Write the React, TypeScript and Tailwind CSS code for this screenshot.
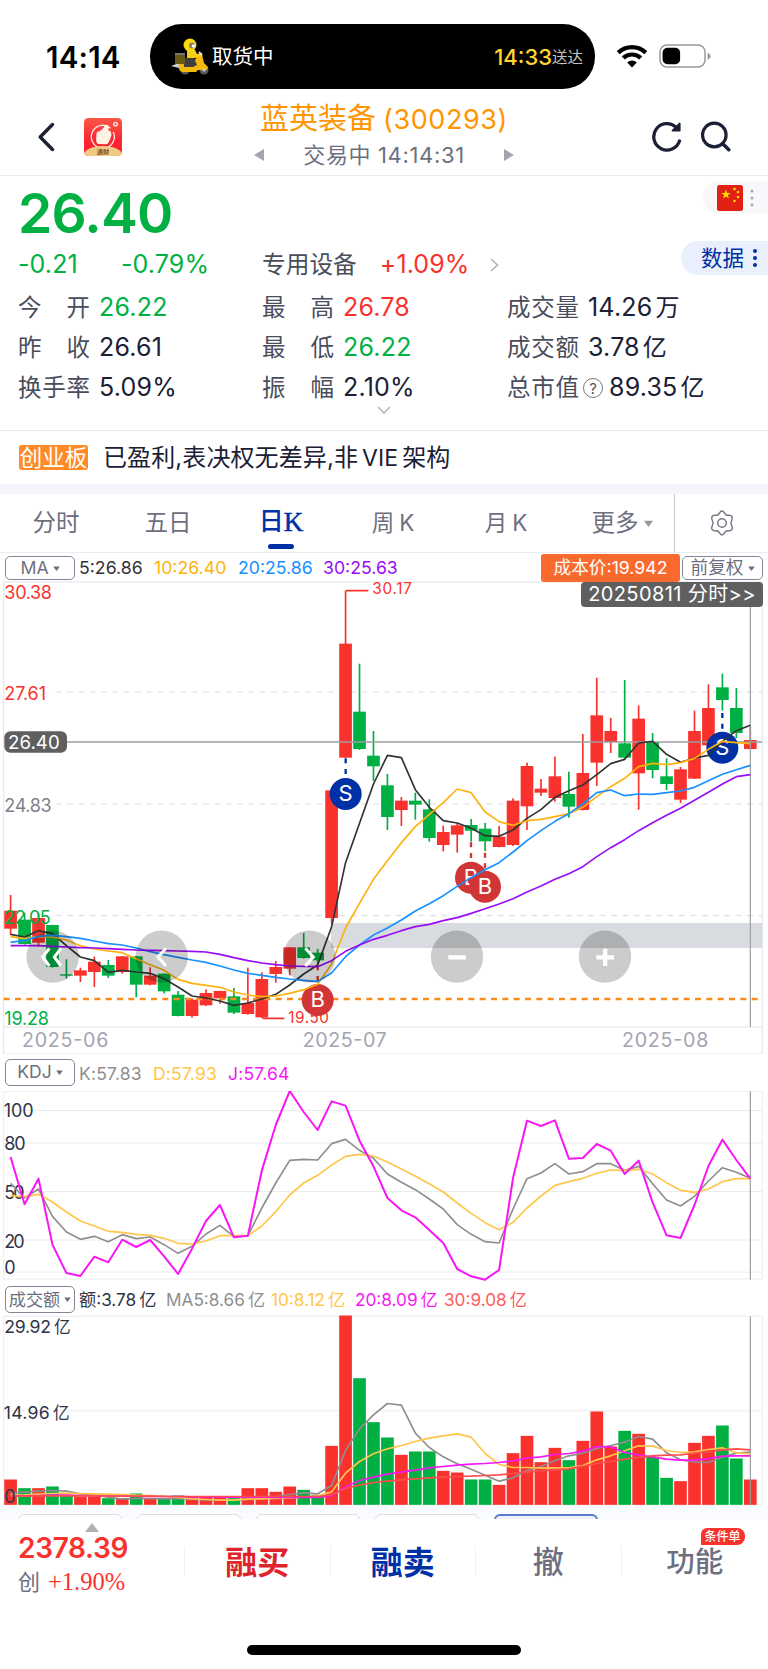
import type { ReactNode } from "react"

const RED = "#f9322d"
const GREEN = "#00b042"

// chart units: 3 per css pixel
const STEP = 41.87
const START = 31.8
const BAR = 38
const LAST_X = 2251

const px = (i: number) => START + STEP * i

// [up (1) / down (0), high, body top, body bottom, low]
const candles = [
  [1, 945, 992, 1046, 1065], [0, 998, 1019, 1092, 1094], [1, 1000, 1014, 1088, 1100], [0, 1034, 1035, 1161, 1163],
  [0, 1138, 1183, 1187, 1196], [1, 1163, 1171, 1187, 1206], [1, 1130, 1145, 1176, 1221], [0, 1140, 1155, 1187, 1194],
  [1, 1128, 1129, 1176, 1181], [0, 1128, 1129, 1214, 1252], [1, 1162, 1187, 1214, 1216], [0, 1180, 1181, 1234, 1240],
  [0, 1233, 1244, 1308, 1309], [1, 1255, 1259, 1308, 1313], [1, 1228, 1239, 1276, 1278], [1, 1232, 1233, 1255, 1271],
  [0, 1224, 1249, 1298, 1302], [1, 1163, 1269, 1302, 1304], [1, 1177, 1197, 1312, 1314], [1, 1143, 1161, 1182, 1208],
  [1, 1101, 1102, 1166, 1186], [0, 1059, 1102, 1134, 1136], [0, 1107, 1118, 1141, 1151], [1, 630, 631, 1014, 1031],
  [1, 32, 191, 533, 533], [0, 251, 395, 507, 510], [0, 453, 527, 559, 603], [0, 582, 616, 711, 750],
  [1, 651, 662, 690, 738], [0, 638, 662, 674, 719], [0, 658, 688, 774, 785], [1, 737, 756, 795, 814],
  [1, 730, 736, 764, 818], [0, 717, 735, 752, 785], [0, 729, 746, 784, 813], [1, 738, 770, 801, 802],
  [1, 655, 662, 795, 798], [1, 548, 558, 679, 750], [1, 597, 626, 638, 648], [1, 530, 589, 654, 665],
  [0, 575, 642, 680, 713], [1, 462, 579, 690, 691], [1, 293, 406, 548, 618], [1, 414, 453, 486, 519],
  [0, 300, 490, 533, 539], [1, 376, 416, 580, 689], [0, 459, 486, 570, 595], [0, 535, 589, 612, 630],
  [1, 561, 568, 659, 669], [1, 392, 453, 596, 597], [1, 313, 384, 496, 497], [0, 281, 322, 360, 392],
  [0, 324, 384, 459, 474], [1, 441, 480, 507, 508],
]

const ma5 = [1063, 1071, 1052, 1061, 1097, 1131, 1142, 1177, 1171, 1176, 1180, 1196, 1221, 1248, 1254, 1263, 1276, 1269, 1257, 1243, 1215, 1182, 1155, 1040, 848, 730, 612, 526, 533, 629, 682, 722, 729, 745, 767, 769, 750, 715, 689, 652, 632, 615, 584, 551, 538, 489, 484, 523, 547, 534, 526, 484, 452, 436]
const ma10 = [1070, 1076, 1070, 1071, 1080, 1097, 1107, 1113, 1118, 1136, 1154, 1171, 1198, 1210, 1216, 1222, 1236, 1245, 1250, 1248, 1240, 1229, 1213, 1152, 1044, 970, 898, 842, 788, 740, 703, 668, 627, 638, 696, 725, 736, 722, 718, 710, 701, 682, 650, 620, 595, 560, 550, 554, 548, 535, 508, 484, 488, 491]
const ma20 = [1087, 1081, 1069, 1066, 1070, 1075, 1083, 1091, 1095, 1104, 1115, 1124, 1132, 1140, 1147, 1158, 1170, 1180, 1186, 1192, 1197, 1201, 1205, 1179, 1130, 1095, 1065, 1044, 1020, 993, 971, 947, 919, 893, 869, 848, 816, 782, 752, 724, 701, 672, 638, 630, 647, 642, 643, 638, 633, 622, 602, 583, 569, 556]
const ma30 = [1097, 1097, 1097, 1099, 1101, 1103, 1104, 1106, 1108, 1110, 1111, 1112, 1113, 1114, 1116, 1123, 1133, 1142, 1149, 1154, 1158, 1159, 1160, 1142, 1114, 1095, 1078, 1066, 1052, 1040, 1033, 1022, 1013, 1000, 986, 972, 956, 936, 918, 898, 881, 860, 830, 803, 779, 752, 728, 706, 685, 661, 637, 612, 590, 584]

const kLine = [401, 445, 418, 500, 547, 569, 560, 576, 555, 567, 562, 585, 611, 590, 553, 527, 561, 558, 475, 400, 332, 329, 331, 282, 269, 302, 326, 373, 398, 420, 448, 478, 525, 554, 576, 580, 478, 387, 370, 342, 373, 366, 342, 342, 362, 350, 402, 451, 469, 440, 394, 354, 368, 386]
const dLine = [438, 441, 434, 457, 487, 514, 529, 545, 548, 554, 557, 566, 581, 583, 574, 558, 558, 558, 529, 486, 436, 400, 377, 346, 320, 314, 319, 337, 358, 380, 402, 427, 460, 491, 519, 540, 518, 475, 439, 407, 396, 386, 371, 361, 362, 359, 373, 399, 422, 428, 418, 396, 387, 387]
const jLine = [322, 464, 387, 585, 670, 679, 621, 638, 570, 592, 571, 620, 673, 597, 514, 466, 563, 558, 363, 226, 124, 187, 241, 155, 168, 273, 350, 445, 482, 503, 541, 580, 658, 680, 690, 661, 385, 213, 229, 212, 327, 325, 283, 303, 373, 333, 458, 557, 565, 466, 349, 270, 331, 387]

const volumes = [599, 625, 625, 620, 645, 650, 650, 655, 655, 641, 655, 655, 647, 650, 650, 652, 655, 625, 625, 636, 620, 630, 645, 498, 107, 295, 427, 473, 525, 515, 515, 573, 578, 599, 599, 615, 520, 468, 547, 504, 541, 483, 395, 500, 453, 462, 531, 594, 604, 489, 468, 437, 536, 599]
const vol5 = [640, 637, 634, 632, 634, 642, 645, 652, 658, 656, 656, 657, 656, 658, 660, 661, 661, 659, 655, 651, 644, 639, 642, 617, 512, 447, 405, 371, 376, 460, 503, 531, 552, 568, 586, 604, 594, 572, 560, 543, 528, 520, 506, 497, 487, 470, 478, 519, 540, 546, 548, 532, 520, 517]
const vol10 = [646, 645, 643, 641, 640, 641, 642, 643, 644, 646, 647, 649, 653, 657, 659, 661, 661, 658, 657, 656, 654, 652, 648, 636, 580, 545, 522, 507, 497, 485, 475, 468, 462, 472, 521, 554, 563, 563, 565, 564, 564, 557, 540, 528, 513, 498, 499, 512, 518, 516, 509, 504, 519, 522]
const vol20 = [649, 648, 647, 646, 646, 647, 648, 649, 649, 650, 650, 650, 650, 651, 651, 652, 652, 652, 652, 653, 653, 653, 653, 648, 621, 602, 592, 583, 577, 571, 564, 560, 556, 553, 551, 548, 543, 535, 531, 524, 521, 514, 500, 501, 518, 526, 532, 538, 541, 541, 537, 529, 528, 528]
const vol30 = [649, 649, 648, 648, 648, 648, 648, 649, 649, 649, 649, 650, 650, 650, 650, 650, 650, 650, 650, 650, 650, 650, 650, 645, 626, 616, 608, 604, 600, 597, 594, 592, 590, 589, 587, 585, 581, 577, 573, 570, 567, 559, 551, 545, 538, 532, 528, 526, 525, 520, 516, 510, 507, 510]

function Line({ data, color, width = 5 }: { data: number[]; color: string; width?: number }) {
  return (
    <polyline
      points={data.map((y, i) => `${px(i)},${y}`).join(" ")}
      fill="none"
      stroke={color}
      strokeWidth={width}
      strokeLinejoin="round"
    />
  )
}

interface LabelProps {
  x: number
  y: number
  w: number
  color: string
  size?: number
  children: string
}

function Label({ x, y, w, color, size = 54, children }: LabelProps) {
  return (
    <text x={x} y={y} fontSize={size} fill={color} textLength={w} lengthAdjust="spacing">
      {children}
    </text>
  )
}

function Marker({ x, y, from, letter }: { x: number; y: number; from: number; letter: "B" | "S" }) {
  const color = letter === "B" ? "#d23535" : "#0030a5"
  return (
    <g>
      <line x1={x} x2={x} y1={from} y2={y - 48} stroke={color} strokeWidth={7} strokeDasharray="15 17" />
      <circle cx={x} cy={y} r={48} fill={color} />
      <text x={x} y={y + 22} fontSize={66} fill="#fff" textAnchor="middle">
        {letter}
      </text>
    </g>
  )
}

function Caret({ className = "" }: { className?: string }) {
  return (
    <svg viewBox="0 0 8 6" className={`w-[7px] h-[5px] ${className}`}>
      <path d="M0 0.5h8L4 6z" fill="currentColor" />
    </svg>
  )
}

function Picker({ className, children }: { className: string; children: ReactNode }) {
  return (
    <button
      className={`flex items-center justify-center gap-1 border border-[#85859a] rounded-[5px] bg-white text-[#6d6f80] whitespace-nowrap shrink-0 ${className}`}
    >
      {children}
      <Caret />
    </button>
  )
}

function StatusBar() {
  return (
    <div className="h-[90px] pt-6 pl-[46px] flex items-start">
      <div className="w-[104px] h-[66px] flex items-center text-[29.5px] font-semibold text-black tracking-[0.2px]">14:14</div>
      <div className="w-[445px] h-[65px] rounded-[32px] bg-black flex items-center pl-[21px] pr-3">
        <svg viewBox="0 0 38 38" className="w-[38px] h-[38px] shrink-0">
          <path d="M0 28l8-3v5z" fill="#cfd0d8" />
          <circle cx="14" cy="32" r="4.5" fill="#585858" />
          <circle cx="33" cy="32" r="4.5" fill="#595959" />
          <path d="M8 26h14l5-10 4 0 2 9 4 4-1 3h-9l-2 2H12c-3 0-5-3-4-8z" fill="#f2b90c" />
          <path d="M13 20h10l3 7-4 2H13z" fill="#3f3e3a" />
          <rect x="4" y="15" width="10" height="11" rx="1" fill="#6a5a16" />
          <path d="M4 15h10v2H4z" fill="#77757b" />
          <path d="M16 12h8l2 4 5-1v3l-7 2h-8z" fill="#f7cf17" />
          <circle cx="19" cy="7" r="6.5" fill="#fbd80f" />
          <circle cx="21" cy="7.5" r="3" fill="#8b8060" />
          <circle cx="22.5" cy="8" r="1.7" fill="#fff" />
          <path d="M28 14l3 3" stroke="#dedfe4" strokeWidth="1.8" />
          <circle cx="33" cy="32" r="1.6" fill="#c8c8c8" />
        </svg>
        <span className="ml-[3px] mt-0.5 text-[20.5px] text-white">取货中</span>
        <span className="ml-auto mt-0.5 text-[22px] font-medium text-[#ffd52e]">14:33</span>
        <span className="mt-[3px] text-[15.5px] text-[#c4c4c4]">送达</span>
      </div>
      <div className="h-16 flex items-center">
        <svg viewBox="0 0 32 24" className="ml-[21px] w-8 h-6">
          <path d="M2.2 8.6a20 20 0 0 1 27.6 0" fill="none" stroke="#000" strokeWidth="4.4" />
          <path d="M7.3 14a12.5 12.5 0 0 1 17.4 0" fill="none" stroke="#000" strokeWidth="4.2" />
          <path d="M11.2 18.4a7 7 0 0 1 9.6 0L16 23.5z" fill="#000" />
        </svg>
        <svg viewBox="0 0 52 24" className="ml-[11px] w-[52px] h-6">
          <rect x="1" y="1" width="45" height="22" rx="7" fill="#fff" stroke="#999" strokeWidth="1.5" />
          <rect x="3.6" y="3.8" width="17.5" height="16.4" rx="4.8" fill="#000" />
          <path d="M48.6 8.4q3 1.4 3 3.8t-3 3.8z" fill="#999" />
        </svg>
      </div>
    </div>
  )
}

function TitleBar() {
  return (
    <div className="h-[86px] flex items-start border-b border-[#ececf0] text-[#1b2035]">
      <svg viewBox="0 0 18 30" className="ml-[37px] mt-[32px] w-[18px] h-[30px]">
        <path d="M15.5 2.5L3.2 15l12.3 12.5" fill="none" stroke="currentColor" strokeWidth="3.4" strokeLinecap="round" strokeLinejoin="round" />
      </svg>
      <svg viewBox="0 0 38 38" className="ml-[29px] mt-[28px] w-[38px] h-[38px]">
        <defs>
          <clipPath id="logo">
            <rect width="38" height="38" rx="4.5" />
          </clipPath>
          <linearGradient id="logoBg" x1="0" y1="0" x2="0" y2="1">
            <stop offset="0" stopColor="#fb5748" />
            <stop offset="0.6" stopColor="#fd2431" />
          </linearGradient>
        </defs>
        <g clipPath="url(#logo)">
          <rect width="38" height="38" fill="url(#logoBg)" />
          <path d="M26.5 10.2A11.5 11.5 0 1 0 29.3 14" fill="none" stroke="#ffe6de" strokeWidth="1.3" />
          <path d="M13 14q3.500-.5 6-3.400c1-1.600 1.500-4 4-3.900 2.200.4 2 3.200 1.200 5.900q3.300.3 3 3 .8 2-.6 3.600.4 2-1.200 3.400-.6 3.800-4.200 3.700l-7-.4q-2.600-1-2-5.600 0-4.800.8-6.300z" fill="#fff1e4" />
          <circle cx="31.5" cy="6.3" r="2.5" fill="#ffd6d0" />
          <circle cx="31.5" cy="6.3" r="1" fill="#fb4a40" />
          <ellipse cx="19" cy="37" rx="19.5" ry="9" fill="#f1ca86" />
          <text x="19" y="36" fontSize="6.2" fontWeight="700" fill="#8a4a17" textAnchor="middle">
            通财
          </text>
        </g>
      </svg>
      <div className="ml-[130px] w-[264px] flex flex-col items-center">
        <div className="mt-[11px] h-9 leading-9 text-[29px] text-[#ff9500] whitespace-nowrap">
          蓝英装备<span className="ml-[7px] text-[27px] tracking-[0.6px]">(300293)</span>
        </div>
        <div className="w-full mt-0.5 h-8 flex items-center justify-between pl-0.5 pr-[2px]">
          <svg viewBox="0 0 10 12" className="w-[10px] h-3">
            <path d="M10 0v12L0 6z" fill="#a3a4af" />
          </svg>
          <span className="text-[22px] text-[#6d6f80] whitespace-nowrap tracking-[0.65px]">交易中 14:14:31</span>
          <svg viewBox="0 0 10 12" className="w-[10px] h-3">
            <path d="M0 0v12l10-6z" fill="#a3a4af" />
          </svg>
        </div>
      </div>
      <svg viewBox="0 0 30 31" className="ml-[136px] mt-[31px] w-[30px] h-[31px]">
        <path d="M27.500 20A13.200 13.200 0 1 1 23.800 6" fill="none" stroke="currentColor" strokeWidth="3.300" strokeLinecap="round" />
        <path d="M27.600 2.600v7h-7z" fill="currentColor" stroke="currentColor" strokeWidth="2" strokeLinejoin="round" />
      </svg>
      <svg viewBox="0 0 30 31" className="ml-[19px] mt-[31px] w-[30px] h-[31px]">
        <circle cx="13.300" cy="14" r="11.800" fill="none" stroke="currentColor" strokeWidth="3.200" />
        <path d="M21.500 22.500l6.300 6.200" stroke="currentColor" strokeWidth="3.500" strokeLinecap="round" />
      </svg>
    </div>
  )
}

interface StatProps {
  label: string
  value: string
  color?: string
  unit?: string
  help?: boolean
}

function Stat({ label, value, color = "text-[#1b2035]", unit, help }: StatProps) {
  return (
    <div className="flex items-center whitespace-nowrap">
      <span className="w-[72px] flex justify-between text-[23.5px] text-[#4a4d5c]">
        {label.split("").map((c) => (
          <span key={c}>{c}</span>
        ))}
      </span>
      {help && (
        <span className="ml-[4px] w-5 h-5 rounded-full border-[1.5px] border-[#777] text-[#555] text-[15px] leading-none flex items-center justify-center">?</span>
      )}
      <span className={`${help ? "ml-[6px]" : "ml-[9px]"} text-[25px] tracking-[0.2px] ${color}`}>{value}</span>
      {unit && <span className="ml-[3px] text-[24px] text-[#1b2035]">{unit}</span>}
    </div>
  )
}

const star = "M0-5L1.2-1.6 4.8-1.5 1.9.6 2.9 4 0 2-2.9 4-1.9.6-4.8-1.5-1.2-1.6z"

function Quote() {
  return (
    <div className="relative h-[255px] border-b border-[#ececf0]">
      <div className="pl-[18px] pt-2.5 h-[65px] flex items-center text-[55px] leading-none font-semibold text-[#00b042] tracking-[-0.7px]">26.40</div>
      <div className="pl-[18px] h-[47px] flex items-center text-[25px] whitespace-nowrap">
        <span className="w-[103px] text-[#00b042] tracking-[0.1px]">-0.21</span>
        <span className="w-[141px] text-[#00b042] tracking-[0.1px]">-0.79%</span>
        <span className="text-[23.7px] text-[#4a4d5c]">专用设备</span>
        <span className="ml-[23px] text-[#f9322d] tracking-[0.1px]">+1.09%</span>
        <svg viewBox="0 0 9 14" className="ml-[21px] w-[9px] h-[14px]">
          <path d="M1 1l6.500 6L1 13" fill="none" stroke="#b5b5bb" strokeWidth="1.700" />
        </svg>
      </div>
      <div className="pl-[18px] grid grid-cols-[244px_245px_1fr] auto-rows-[40px]">
        <Stat label="今开" value="26.22" color="text-[#00b042]" />
        <Stat label="最高" value="26.78" color="text-[#f9322d]" />
        <Stat label="成交量" value="14.26" unit="万" />
        <Stat label="昨收" value="26.61" />
        <Stat label="最低" value="26.22" color="text-[#00b042]" />
        <Stat label="成交额" value="3.78" unit="亿" />
        <Stat label="换手率" value="5.09%" />
        <Stat label="振幅" value="2.10%" />
        <Stat label="总市值" value="89.35" unit="亿" help />
      </div>
      <svg viewBox="0 0 14 8" className="mx-auto -mt-[2px] w-[14px] h-2">
        <path d="M1 1l6 6 6-6" fill="none" stroke="#b5b5bb" strokeWidth="1.600" />
      </svg>
      {/* Pestañas flotantes */}
      <div className="absolute right-0 top-[5px] w-[65px] h-[33px] rounded-l-full bg-[#f8f8fa] pl-[14px] flex items-center">
        <svg viewBox="0 0 26 26" className="w-[26px] h-[26px]">
          <rect width="26" height="26" rx="2.5" fill="#e02113" />
          <path d={star} transform="translate(9 9.500)" fill="#ffde00" />
          <circle cx="17.5" cy="4" r="1.3" fill="#ffde00" />
          <circle cx="21" cy="7" r="1.3" fill="#ffde00" />
          <circle cx="21" cy="12" r="1.3" fill="#ffde00" />
          <circle cx="17.5" cy="16" r="1.3" fill="#ffde00" />
        </svg>
        <svg viewBox="0 0 4 18" className="ml-[7px] w-1 h-[18px] fill-[#aaaab2]">
          <circle cx="2" cy="2" r="1.5" />
          <circle cx="2" cy="9" r="1.5" />
          <circle cx="2" cy="16" r="1.5" />
        </svg>
      </div>
      <div className="absolute right-0 top-[65px] w-[87px] h-[34px] rounded-l-full bg-[#eaeffc] pl-5 flex items-center text-[#0030a5]">
        <span className="text-[21.5px]">数据</span>
        <svg viewBox="0 0 4 18" className="ml-[9px] w-1 h-[18px] fill-[#0030a5]">
          <circle cx="2" cy="2" r="2" />
          <circle cx="2" cy="9" r="2" />
          <circle cx="2" cy="16" r="2" />
        </svg>
      </div>
    </div>
  )
}

function Tabs() {
  return (
    <div className="h-[59px] flex text-[23.5px] text-[#6d6f80] whitespace-nowrap border-b border-[#ececf0]">
      <div className="w-[112px] flex items-center justify-center">分时</div>
      <div className="w-[112px] flex items-center justify-center">五日</div>
      <div className="relative w-[114px] flex items-center justify-center text-[#0030a5]">
        <span className="text-[25px] font-medium -mt-0.5">日</span>
        <span className="font-['Liberation_Serif',serif] text-[27px] font-medium -mt-0.5 [-webkit-text-stroke:0.5px_#0030a5]">K</span>
        <div className="absolute left-[44px] bottom-[3px] w-[26px] h-[5px] rounded-full bg-[#0030a5]"></div>
      </div>
      <div className="w-[110px] flex items-center justify-center gap-[5px] text-[22.5px]">周<span>K</span></div>
      <div className="w-[116px] flex items-center justify-center gap-[5px] text-[22.5px]">月<span>K</span></div>
      <div className="w-[110px] pl-[6px] flex items-center justify-center gap-[5px]">
        更多
        <Caret className="w-[9px] h-[7px] text-[#999]" />
      </div>
      <div className="flex-1 border-l border-[#c9c9cf] flex items-center justify-center">
        <svg viewBox="0 0 26 26" className="w-[26px] h-[26px]" fill="none" stroke="#777985" strokeWidth="1.5">
          <path
            d="M13 1c2.200 0 2.500 3 4.300 4s4.300-.9 5.700 1.600-1 3.800-1 6.400 2.400 3.900 1 6.400-3.900.6-5.700 1.600-2.100 4-4.300 4-2.500-3-4.300-4-4.300.9-5.700-1.600 1-3.800 1-6.400-2.400-3.900-1-6.400S6.900 6 8.700 5 10.800 1 13 1z"
            strokeLinejoin="round"
          />
          <circle cx="13" cy="13" r="4.3" />
        </svg>
      </div>
    </div>
  )
}

function KChart() {
  return (
    <svg viewBox="0 0 2304 1422" className="block w-[768px] h-[474px]">
      <g stroke="#e3e4e8" strokeWidth="3" fill="none">
        <path d="M10 6H2287M11 6V1422M2287 6V1422M11 1341H2287M11 1422H2287" />
        <path d="M167 336.500H2287M167 671.500H2287M167 1006.500H2287" strokeWidth="4" strokeDasharray="18 16" />
      </g>
      <rect x="993" y="1029" width="1294" height="75" fill="#d8dce0" />
      {candles.map(([up, hi, top, bottom, lo], i) => (
        <g key={i} fill={up ? RED : GREEN}>
          <rect x={px(i) - 2.5} y={hi} width={5} height={lo - hi} />
          <rect x={px(i) - BAR / 2} y={top} width={BAR} height={bottom - top} />
        </g>
      ))}
      <path d="M1037 32H1105M787 1315H853" stroke={RED} strokeWidth="5" />
      <Label x={1117} y={42} w={119} size={46} color={RED}>30.17</Label>
      <Label x={865} y={1329} w={122} size={46} color={RED}>19.50</Label>
      <line x1="11" x2="2287" y1="1257" y2="1257" stroke="#fb8c1c" strokeWidth="7" strokeDasharray="18 16" />
      <line x1="200" x2="2287" y1="486" y2="486" stroke="#9c9c9f" strokeWidth="4" />
      <line x1={LAST_X} x2={LAST_X} y1="6" y2="1341" stroke="#9c9c9f" strokeWidth="3.5" />
      <Marker x={1037} y={642} from={535} letter="S" />
      <Marker x={953} y={1260} from={1156} letter="B" />
      <Marker x={1413} y={893} from={787} letter="B" />
      <Marker x={1455} y={920} from={818} letter="B" />
      <Marker x={2167} y={503} from={399} letter="S" />
      <Line data={ma5} color="#333" />
      <Line data={ma10} color="#ffb20d" />
      <Line data={ma20} color="#1890ff" />
      <Line data={ma30} color="#9a0cf5" />
      <Label x={13} y={57} w={143} color={RED}>30.38</Label>
      <Label x={13} y={361} w={125} color={RED}>27.61</Label>
      <Label x={13} y={696} w={142} color="#7d7f8c">24.83</Label>
      <Label x={13} y={1031} w={139} color={GREEN}>22.05</Label>
      <Label x={13} y={1334} w={134} color={GREEN}>19.28</Label>
      <rect x="13" y="454" width="188" height="64" rx="18" fill="#5f5f5f" />
      <Label x={24} y={506} w={155} size={56} color="#fff">26.40</Label>
      <Label x={66} y={1401} w={259} size={59} color="#a3a4af">2025-06</Label>
      <Label x={908} y={1401} w={252} size={59} color="#a3a4af">2025-07</Label>
      <Label x={1866} y={1401} w={259} size={59} color="#a3a4af">2025-08</Label>
      {[158, 485, 928, 1371, 1815].map((x) => (
        <circle key={x} cx={x} cy="1130" r="78.5" fill="#000" fillOpacity="0.2" />
      ))}
      <g stroke="#fff" strokeWidth="9" fill="none">
        <path d="M148 1105l-20 26 20 27M183 1105l-20 26 20 27M498 1105l-24 26 24 27M916 1105l24 26-24 27" />
      </g>
      <path d="M1345 1132h53M1789 1132h53M1815.500 1106v52" stroke="#fff" strokeWidth="13" />
    </svg>
  )
}

function KdjChart() {
  return (
    <svg viewBox="0 124 2304 570" className="block w-[768px] h-[190px]">
      <path d="M11 125H2287M11 125V688M2287 125V688M11 688H2287M11 182.500H2287M11 280H2287M11 425.500H2287M11 571H2287M11 667.500H2287" stroke="#ebecef" strokeWidth="3" fill="none" />
      <Label x={11} y={203} w={90} size={54} color="#2f3347">100</Label>
      <Label x={13} y={302} w={64} size={54} color="#2f3347">80</Label>
      <Label x={13} y={448} w={61} size={54} color="#2f3347">50</Label>
      <Label x={13} y={595} w={61} size={54} color="#2f3347">20</Label>
      <Label x={13} y={674} w={29} size={54} color="#2f3347">0</Label>
      <line x1={LAST_X} x2={LAST_X} y1="125" y2="690" stroke="#9c9c9f" strokeWidth="3.5" />
      <Line data={kLine} color="#8f8f8f" />
      <Line data={dLine} color="#ffc64a" />
      <Line data={jLine} color="#f916f5" width={6} />
    </svg>
  )
}

function VolumeChart() {
  return (
    <svg viewBox="0 106 2304 572" className="block w-[768px] h-[191px]">
      <path d="M11 109H2287M11 109V675M2287 109V675M11 675H2287M11 393H2287" stroke="#ebecef" strokeWidth="3" fill="none" />
      {volumes.map((y, i) => (
        <rect key={i} x={px(i) - BAR / 2} y={y} width={BAR} height={675 - y} fill={candles[i][0] ? RED : GREEN} />
      ))}
      <line x1={LAST_X} x2={LAST_X} y1="109" y2="675" stroke="#9c9c9f" strokeWidth="3.5" />
      <Line data={vol5} color="#8f8f8f" />
      <Line data={vol10} color="#ffc64a" />
      <Line data={vol20} color="#f916f5" />
      <Line data={vol30} color="#ff4d4f" />
      <Label x={13} y={161} w={140} size={53} color="#2f3347">29.92</Label>
      <Label x={162} y={161} w={50} size={50} color="#2f3347">亿</Label>
      <Label x={11} y={419} w={138} size={53} color="#2f3347">14.96</Label>
      <Label x={159} y={419} w={50} size={50} color="#2f3347">亿</Label>
      <Label x={13} y={670} w={29} size={54} color="#2f3347">0</Label>
    </svg>
  )
}

function Amount({ className, children }: { className: string; children: ReactNode }) {
  return (
    <span className={`flex items-center gap-[3px] ${className}`}>
      {children}
      <span>亿</span>
    </span>
  )
}

function BottomBar() {
  return (
    <div className="h-[126px] flex">
      <div className="w-[184px] pl-[18px]">
        <svg viewBox="0 0 14 9" className="ml-[67px] mt-1 w-[14px] h-[9px]">
          <path d="M7 0l7 9H0z" fill="#b0b0b2" />
        </svg>
        <div className="h-8 leading-8 text-[28px] font-semibold text-[#f9322d] tracking-[-0.3px]">2378.39</div>
        <div className="mt-0.5 h-8 flex items-center text-[22px] text-[#6d6f80]">
          创<span className="ml-2 font-['Liberation_Serif',serif] text-[24.5px] text-[#f9322d]">+1.90%</span>
        </div>
      </div>
      <div className="mt-[27px] pt-1 h-[29px] w-[145.500px] border-l border-[#f0f0f4] flex items-center justify-center text-[32px] font-bold text-[#e0232a]">融买</div>
      <div className="mt-[27px] pt-1 h-[29px] w-[145.500px] border-l border-[#f0f0f4] flex items-center justify-center text-[32px] font-bold text-[#0030a5]">融卖</div>
      <div className="mt-[27px] pt-1 h-[29px] w-[145.500px] border-l border-[#f0f0f4] flex items-center justify-center text-[31px] font-medium text-[#6d6f80]">撤</div>
      <div className="relative mt-[27px] pt-1 h-[29px] flex-1 border-l border-[#f0f0f4] flex items-center justify-center text-[28.5px] font-medium text-[#6d6f80]">
        功能
        <span className="absolute left-[79px] -top-[18px] w-[44px] h-[17px] rounded-tl-[6px] rounded-r-[8px] bg-[#f9322d] text-white text-[12px] leading-[17px] text-center">
          条件单
        </span>
      </div>
    </div>
  )
}

export default function App() {
  return (
    <div className="w-[768px] h-[1669px] overflow-hidden bg-white font-['Inter','Noto_Sans_CJK_SC',sans-serif]">
      <StatusBar />
      <TitleBar />
      <Quote />
      <div className="h-[53px] pl-[19px] flex items-center whitespace-nowrap">
        <span className="w-[69px] h-[25px] rounded-[3px] bg-[#ff8a26] text-white text-[22.5px] leading-[25px] text-center">创业板</span>
        <span className="ml-[15px] text-[24px] tracking-[0.1px] text-[#1b2035]">
          已盈利,表决权无差异,非<span className="mx-1 text-[23px]">VIE</span>架构
        </span>
      </div>
      <div className="h-[10px] bg-[#f4f5fb]"></div>
      <Tabs />

      <div className="relative h-[27px] pl-[5px] pr-[5px] flex items-center text-[17.7px] whitespace-nowrap">
        <Picker className="w-[70px] h-6 mt-[3px]">MA</Picker>
        <span className="ml-1 mt-[3px] w-[75px] text-[#333]">5:26.86</span>
        <span className="w-[84px] mt-[3px] text-[#ffb20d]">10:26.40</span>
        <span className="w-[85px] mt-[3px] text-[#1890ff]">20:25.86</span>
        <span className="mt-[3px] text-[#9a0cf5]">30:25.63</span>
        <span className="ml-auto mr-0.5 mt-[3px] w-[139px] h-7 rounded-[3px] bg-[#fa6a2e] text-white leading-7 text-center shrink-0">成本价:19.942</span>
        <Picker className="w-[81px] h-6 mt-[3px]">前复权</Picker>
        <div className="absolute z-10 right-[5px] top-[29px] w-[182px] h-[25px] rounded-[4px] bg-[#5f5f5f] text-white text-[20px] leading-[25px] text-center tracking-[0.4px]">
          20250811 分时&gt;&gt;
        </div>
      </div>
      <KChart />

      <div className="h-[37px] pl-[5px] flex items-center text-[17.5px] whitespace-nowrap">
        <Picker className="w-[70px] h-[27px]">KDJ</Picker>
        <span className="ml-1 mt-1 w-[74px] text-[#8f8f8f] tracking-[0.2px]">K:57.83</span>
        <span className="w-[75px] mt-1 text-[#ffc64a] tracking-[0.2px]">D:57.93</span>
        <span className="mt-1 text-[#f916f5] tracking-[0.2px]">J:57.64</span>
      </div>
      <KdjChart />

      <div className="h-[34px] pl-[5px] flex items-center text-[17.2px] whitespace-nowrap">
        <Picker className="w-[70px] h-[27px] mt-[3px]">成交额</Picker>
        <Amount className="ml-1 mt-1 w-[87px] text-[#2f3347]">额:3.78</Amount>
        <Amount className="w-[105px] mt-1 text-[#8f8f8f]">MA5:8.66</Amount>
        <Amount className="w-[84px] mt-1 text-[#ffc64a]">10:8.12</Amount>
        <Amount className="w-[89px] mt-1 text-[#f916f5]">20:8.09</Amount>
        <Amount className="mt-1 text-[#ff5c5c]">30:9.08</Amount>
      </div>
      <VolumeChart />

      <div className="h-[13px] pt-2 pl-[18px] bg-[#fafbff] flex gap-[15px] overflow-hidden">
        <div className="w-[104px] h-8 shrink-0 rounded-[6px] border-[1.5px] border-[#dddde0] bg-white"></div>
        <div className="w-[104px] h-8 shrink-0 rounded-[6px] border-[1.5px] border-[#dddde0] bg-white"></div>
        <div className="w-[104px] h-8 shrink-0 rounded-[6px] border-[1.5px] border-[#dddde0] bg-white"></div>
        <div className="w-[104px] h-8 shrink-0 rounded-[6px] border-[1.5px] border-[#dddde0] bg-white"></div>
        <div className="w-[104px] h-8 shrink-0 rounded-[6px] border-2 border-[#5b7ac8] bg-[#eef2fc]"></div>
      </div>
      <BottomBar />
      <div className="mx-auto w-[274px] h-[10px] rounded-full bg-black"></div>
    </div>
  )
}
